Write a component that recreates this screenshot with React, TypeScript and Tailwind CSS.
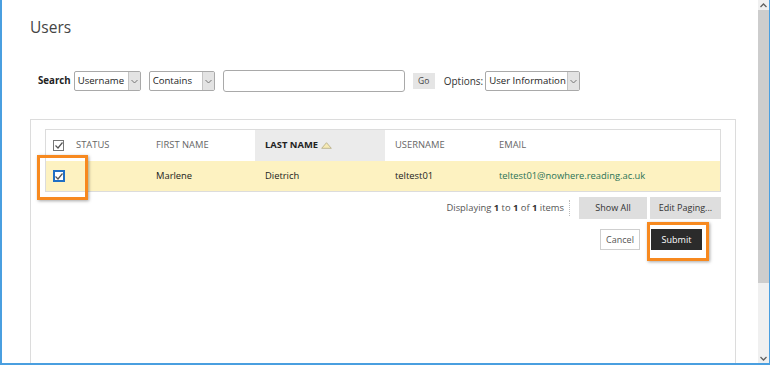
function Chevron() {
  return (
    <svg width="7" height="5" viewBox="0 0 7 5" fill="none" stroke="#777" strokeWidth="1">
      <path d="M0.5 1 L3.5 4 L6.5 1" />
    </svg>
  );
}

function Select({ label, width }: { label: string; width: string }) {
  return (
    <div className={`${width} shrink-0 h-[20px] flex items-stretch border border-[#a9a9a9] rounded-[2px] bg-white`}>
      <span className="flex-1 pl-[3px] text-[9.6px] leading-[18px] text-[#222] whitespace-nowrap">
        {label}
      </span>
      <span className="w-[12px] shrink-0 flex items-center justify-center bg-[#e3e3e3] border-l border-[#c4c4c4]">
        <Chevron />
      </span>
    </div>
  );
}

function CheckBox({ focus }: { focus?: boolean }) {
  return (
    <div
      className={
        focus
          ? "w-[12px] h-[12px] border-2 border-[#1f6fc5] bg-white flex items-center justify-center"
          : "w-[11px] h-[11px] border border-[#777] bg-white flex items-center justify-center"
      }
    >
      <svg width="8" height="7" viewBox="0 0 8 7" fill="none" stroke="#555" strokeWidth="1.2">
        <path d="M0.5 3.5 L3 6 L7.5 0.5" />
      </svg>
    </div>
  );
}

function SortArrow() {
  return (
    <svg width="11" height="7" viewBox="0 0 11 7" className="ml-[3px]">
      <path d="M5.5 0.7 L10.3 6.3 L0.7 6.3 Z" fill="#f6eab4" stroke="#b9b08a" strokeWidth="0.9" />
    </svg>
  );
}

export default function App() {
  return (
    <div
      className="w-[770px] h-[365px] flex bg-white border-l-2 border-b-2 border-r border-[#4a9fe0] overflow-hidden"
      style={{ fontFamily: '"Open Sans", "Liberation Sans", sans-serif' }}
    >
      {/* page */}
      <div className="flex-1 flex flex-col pl-[28px] pr-[22px]">
        <h1 className="mt-[15px] h-[24px] text-[15.5px] leading-[24px] text-[#444]">Users</h1>

        {/* search bar */}
        <div className="mt-[31px] h-[22px] flex items-center whitespace-nowrap">
          <span className="ml-[8px] mr-[3px] font-bold text-[#222] text-[9.7px]">Search</span>
          <Select label="Username" width="w-[67px]" />
          <div className="w-[8px] shrink-0" />
          <Select label="Contains" width="w-[66px]" />
          <div className="ml-[8px] w-[182px] shrink-0 h-[22px] border border-[#a9a9a9] rounded-[3px] bg-white" />
          <div className="ml-[8px] w-[22px] shrink-0 h-[16px] bg-[#e5e5e5] text-[8.5px] leading-[16px] text-center text-[#444]">
            Go
          </div>
          <span className="ml-[9px] mr-[2px] text-[10px] text-[#333]">Options:</span>
          <Select label="User Information" width="w-[95px]" />
        </div>

        {/* panel */}
        <div className="mt-[27px] flex-1 border-t border-l border-r border-[#dcdcdc] pt-[9px] px-[14px]">
          <div className="border border-[#dcdcdc] text-[9.4px]">
            <div className="flex h-[31px] items-stretch text-[#666] uppercase">
              <div className="w-[20px] pl-[7px] flex items-center">
                <CheckBox />
              </div>
              <div className="w-[80px] pl-[10px] flex items-center">Status</div>
              <div className="w-[109px] pl-[10px] flex items-center">First Name</div>
              <div className="w-[130px] pl-[10px] flex items-center bg-[#ebebeb] font-bold text-[#222]">
                Last Name
                <SortArrow />
              </div>
              <div className="w-[104px] pl-[10px] flex items-center">Username</div>
              <div className="flex-1 pl-[10px] flex items-center">Email</div>
            </div>
            <div className="flex h-[30px] items-center bg-[#fdf2c1] text-[#222]">
              <div className="w-[20px] pl-[7px] flex items-center">
                <div className="relative">
                  <CheckBox focus />
                  <div className="absolute left-[-16px] top-[-15px] w-[51px] h-[45px] border-[3px] border-[#f7891f] shadow-[1px_1px_3px_rgba(0,0,0,0.35)]" />
                </div>
              </div>
              <div className="w-[80px]" />
              <div className="w-[109px] pl-[10px]">Marlene</div>
              <div className="w-[130px] pl-[10px]">Dietrich</div>
              <div className="w-[104px] pl-[10px]">teltest01</div>
              <div className="flex-1 pl-[10px] text-[#2b7256]">teltest01@nowhere.reading.ac.uk</div>
            </div>
          </div>

          {/* paging */}
          <div className="mt-[5px] flex justify-end items-center text-[9.4px] text-[#555]">
            <span>
              Displaying <b className="text-[#333]">1</b> to <b className="text-[#333]">1</b> of{" "}
              <b className="text-[#333]">1</b> items
            </span>
            <div className="ml-[5px] mr-[9px] h-[16px] border-l border-dotted border-[#bbb]" />
            <div className="w-[68px] h-[22px] bg-[#dedede] text-[#333] text-[9px] flex items-center justify-center">
              Show All
            </div>
            <div className="ml-[3px] w-[71px] h-[22px] bg-[#dedede] text-[#333] text-[9px] flex items-center justify-center">
              Edit Paging...
            </div>
          </div>

          {/* actions */}
          <div className="mt-[10px] mr-[19px] flex justify-end items-center text-[9px]">
            <div className="w-[40px] h-[21px] border border-[#cfcfcf] bg-white text-[#555] flex items-center justify-center">
              Cancel
            </div>
            <div className="relative ml-[11px]">
              <div className="w-[51px] h-[21px] bg-[#2b2b2b] text-white flex items-center justify-center">Submit</div>
              <div className="absolute left-[-4px] top-[-7px] w-[62px] h-[39px] border-[3px] border-[#f7891f] shadow-[1px_1px_3px_rgba(0,0,0,0.35)]" />
            </div>
          </div>
        </div>
      </div>

      {/* scrollbar */}
      <div className="w-[11px] flex flex-col bg-[#f0f0f0]">
        <div className="h-[10px] flex items-center justify-center">
          <svg width="7" height="5" viewBox="0 0 7 5" fill="none" stroke="#606060" strokeWidth="1.3">
            <path d="M0.5 4 L3.5 1 L6.5 4" />
          </svg>
        </div>
        <div className="h-[273px] bg-[#cdcdcd]" />
        <div className="flex-1" />
        <div className="h-[10px] flex items-center justify-center">
          <svg width="7" height="5" viewBox="0 0 7 5" fill="none" stroke="#606060" strokeWidth="1.3">
            <path d="M0.5 1 L3.5 4 L6.5 1" />
          </svg>
        </div>
      </div>
    </div>
  );
}
